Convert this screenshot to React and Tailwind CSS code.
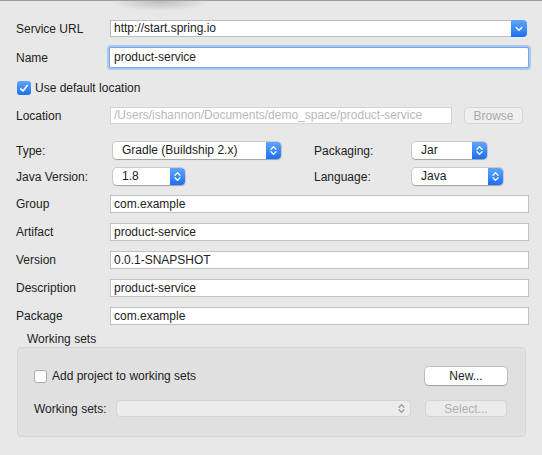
import React from 'react';

function UpDown({ color = '#ffffff' }) {
  return (
    <svg width="7" height="11" viewBox="0 0 7 11" fill="none">
      <path d="M1 4.2 L3.5 1.6 L6 4.2" stroke={color} strokeWidth="1.3" strokeLinecap="round" strokeLinejoin="round" />
      <path d="M1 6.8 L3.5 9.4 L6 6.8" stroke={color} strokeWidth="1.3" strokeLinecap="round" strokeLinejoin="round" />
    </svg>
  );
}

function Popup({ value, w }) {
  return (
    <div className={`flex h-[17px] ${w} rounded-[4px] bg-white shadow-[0_0_0_1px_rgba(0,0,0,0.12),0_1px_1px_rgba(0,0,0,0.2)]`}>
      <div className="flex-1 pl-[9px] leading-[17px]">{value}</div>
      <div className="flex w-[15px] items-center justify-center rounded-r-[4px] bg-gradient-to-b from-[#5ea5fb] to-[#1b6ff6]">
        <UpDown />
      </div>
    </div>
  );
}

function Field({ label, value }) {
  return (
    <div className="mt-[10px] flex h-[18px] items-center">
      <div className="w-[110px] pl-[16px]">{label}</div>
      <div className="h-[18px] w-[419px] border border-[#c2c2c2] bg-white pl-[3px] leading-[16px]">{value}</div>
    </div>
  );
}

export default function App() {
  return (
    <div className="h-[455px] w-[542px] overflow-hidden border-t border-[#9c9c9c] bg-[#e8e8e8] bg-[radial-gradient(ellipse_50px_10px_at_160px_0px,#bcbcbc,transparent)] pt-[19px] text-[12px] text-[#222222] [font-family:'Liberation_Sans',Arial,sans-serif]">
      {/* Service URL */}
      <div className="flex h-[17px] items-center">
        <div className="w-[110px] pl-[16px]">Service URL</div>
        <div className="flex h-[17px] w-[417px]">
          <div className="flex-1 border border-r-0 border-[#bdbdbd] bg-white pl-[3px] leading-[15px]">http://start.spring.io</div>
          <div className="flex w-[16px] items-center justify-center rounded-r-[4px] bg-gradient-to-b from-[#5ea5fb] to-[#1b6ff6]">
            <svg width="8" height="6" viewBox="0 0 8 6" fill="none">
              <path d="M1.2 1.5 L4 4.3 L6.8 1.5" stroke="#fff" strokeWidth="1.4" strokeLinecap="round" strokeLinejoin="round" />
            </svg>
          </div>
        </div>
      </div>

      {/* Name */}
      <div className="mt-[10px] flex h-[21px] items-center">
        <div className="w-[109px] pl-[16px]">Name</div>
        <div className="h-[21px] w-[420px] rounded-[2px] border border-[#78a6ea] bg-white pl-[4px] leading-[19px] shadow-[0_0_0_2px_#a9c7f1]">product-service</div>
      </div>

      {/* Use default location */}
      <div className="ml-[17px] mt-[13px] flex h-[14px] items-center gap-[4px]">
        <div className="flex h-[14px] w-[14px] items-center justify-center rounded-[3px] bg-gradient-to-b from-[#5ea5fb] to-[#1b6ff6]">
          <svg width="10" height="9" viewBox="0 0 10 9" fill="none">
            <path d="M1.8 4.8 L4 7 L8.2 1.6" stroke="#fff" strokeWidth="1.7" strokeLinecap="round" strokeLinejoin="round" />
          </svg>
        </div>
        <span>Use default location</span>
      </div>

      {/* Location */}
      <div className="mt-[12px] flex h-[17px] items-center">
        <div className="w-[110px] pl-[16px]">Location</div>
        <div className="h-[17px] w-[342px] border border-[#d3d3d3] bg-white pl-[3px] leading-[15px] text-[#b8b8b8]">/Users/ishannon/Documents/demo_space/product-service</div>
        <div className="ml-[12px] flex h-[17px] w-[59px] items-center justify-center rounded-[4px] border border-[#d6d6d6] bg-[#efefef] text-[#ababab]">Browse</div>
      </div>

      {/* Type / Packaging */}
      <div className="mt-[18px] flex h-[17px] items-center">
        <div className="w-[113px] pl-[16px]">Type:</div>
        <Popup value="Gradle (Buildship 2.x)" w="w-[168px]" />
        <div className="ml-[33px] w-[98px]">Packaging:</div>
        <Popup value="Jar" w="w-[75px]" />
      </div>

      {/* Java Version / Language */}
      <div className="mt-[9px] flex h-[17px] items-center">
        <div className="w-[113px] pl-[16px]">Java Version:</div>
        <Popup value="1.8" w="w-[72px]" />
        <div className="ml-[129px] w-[98px]">Language:</div>
        <Popup value="Java" w="w-[91px]" />
      </div>

      <div className="mt-[1px]">
        <Field label="Group" value="com.example" />
        <Field label="Artifact" value="product-service" />
        <Field label="Version" value="0.0.1-SNAPSHOT" />
        <Field label="Description" value="product-service" />
        <Field label="Package" value="com.example" />
      </div>

      {/* Working sets */}
      <div className="mt-[7px] pl-[27px] leading-[14px]">Working sets</div>
      <div className="ml-[17px] mt-[1px] h-[90px] w-[509px] rounded-[4px] border border-[#d5d5d5] bg-[#e0e0e0] pl-[16px] pt-[19px]">
        <div className="flex h-[18px] items-center">
          <div className="flex h-[13px] w-[13px] rounded-[3px] border border-[#ababab] bg-white" />
          <span className="ml-[5px]">Add project to working sets</span>
          <div className="ml-auto mr-[18px] flex h-[18px] w-[82px] items-center justify-center rounded-[4px] bg-white shadow-[0_0_0_1px_rgba(0,0,0,0.14),0_1px_1px_rgba(0,0,0,0.18)]">New...</div>
        </div>
        <div className="mt-[15px] flex h-[17px] items-center">
          <div className="w-[82px]">Working sets:</div>
          <div className="flex h-[17px] w-[295px] items-center justify-end rounded-[4px] border border-[#d4d4d4] bg-[#ececec] pr-[5px]">
            <UpDown color="#9a9a9a" />
          </div>
          <div className="ml-auto mr-[18px] flex h-[17px] w-[82px] items-center justify-center rounded-[4px] border border-[#d4d4d4] bg-[#ebebeb] text-[#b0b0b0]">Select...</div>
        </div>
      </div>
    </div>
  );
}
